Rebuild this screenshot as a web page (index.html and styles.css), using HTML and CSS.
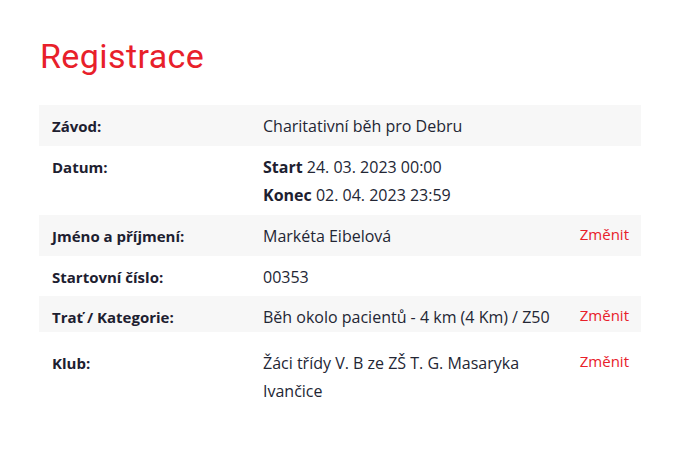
FILE: index.html
```html
<!DOCTYPE html>
<html lang="cs">
<head>
<meta charset="utf-8">
<title>Registrace</title>
<link rel="stylesheet" href="styles.css">
</head>
<body>
<main class="page">
  <h1 class="title">Registrace</h1>
  <div class="table">
    <div class="row grey">
      <div class="label">Závod:</div>
      <div class="value">Charitativní běh pro Debru</div>
      <div class="action"></div>
    </div>
    <div class="row">
      <div class="label">Datum:</div>
      <div class="value"><strong>Start</strong> 24. 03. 2023 00:00<br><strong>Konec</strong> 02. 04. 2023 23:59</div>
      <div class="action"></div>
    </div>
    <div class="row grey">
      <div class="label">Jméno a příjmení:</div>
      <div class="value">Markéta Eibelová</div>
      <div class="action"><a href="#" class="link">Změnit</a></div>
    </div>
    <div class="row short">
      <div class="label">Startovní číslo:</div>
      <div class="value">00353</div>
      <div class="action"></div>
    </div>
    <div class="row grey tight">
      <div class="label">Trať / Kategorie:</div>
      <div class="value">Běh okolo pacientů - 4 km (4 Km) / Z50</div>
      <div class="action"><a href="#" class="link">Změnit</a></div>
    </div>
    <div class="row last">
      <div class="label">Klub:</div>
      <div class="value">Žáci třídy V. B ze ZŠ T. G. Masaryka<br>Ivančice</div>
      <div class="action"><a href="#" class="link">Změnit</a></div>
    </div>
  </div>
</main>
</body>
</html>
```

FILE: styles.css
```css
html, body {
  margin: 0;
  padding: 0;
  background: #ffffff;
}
body {
  font-family: "Open Sans", Roboto, sans-serif;
  color: #232634;
  font-size: 15px;
}
.page {
  padding: 0 53px 0 39px;
}
.title {
  margin: 0 0 29px 0;
  padding: 36px 0 0 1px;
  font-family: Roboto, sans-serif;
  font-size: 34px;
  letter-spacing: 0.4px;
  line-height: 40px;
  font-weight: 400;
  color: #e8202a;
}
.table {
  display: flex;
  flex-direction: column;
}
.row {
  display: grid;
  grid-template-columns: 211px 1fr auto;
  padding: 7px 12px 6px 13px;
  line-height: 28px;
}
.row.grey {
  background: #f7f7f7;
}
.row.short {
  padding-bottom: 5px;
}
.row.tight {
  padding-bottom: 1px;
}
.row.last {
  padding-top: 17px;
}
.label {
  font-weight: 700;
  color: #1d2030;
}
.value {
  font-size: 16px;
}
.value strong {
  font-weight: 700;
  color: #1d2030;
}
.action {
  line-height: 24px;
}
.link {
  color: #e8202a;
  text-decoration: none;
}
```
